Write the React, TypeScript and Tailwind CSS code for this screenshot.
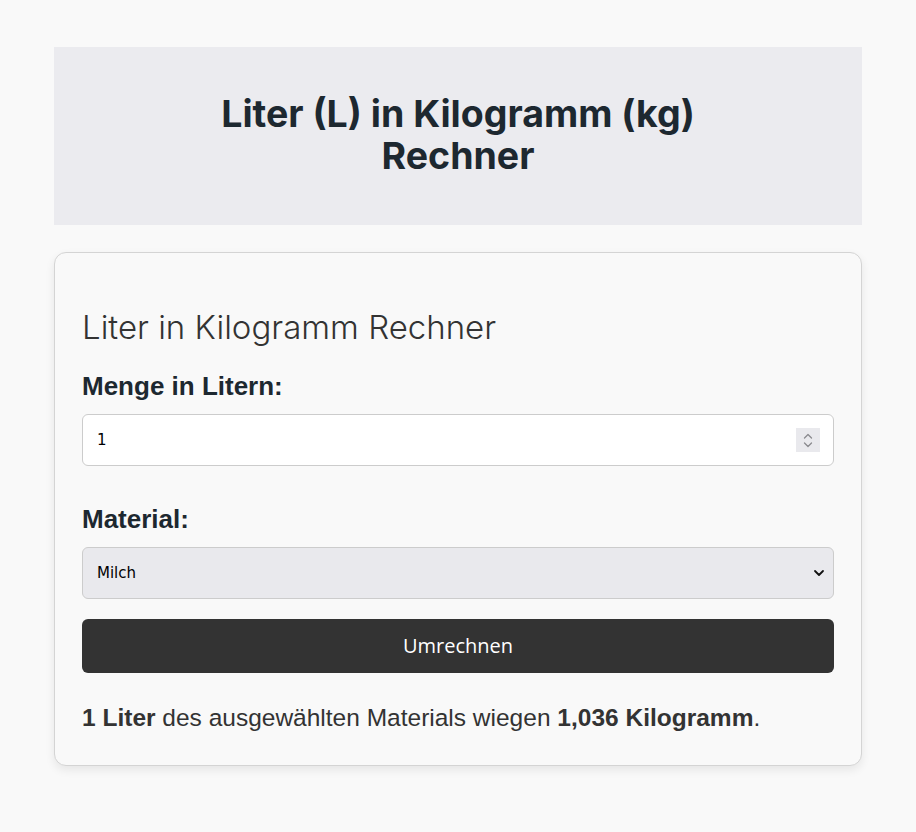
import { useState } from 'react'

const DENSITIES: Record<string, number> = {
  Milch: 1.036,
  Wasser: 1,
  Olivenöl: 0.918,
  Honig: 1.42,
}

export default function App() {
  const [liters, setLiters] = useState('1')
  const [material, setMaterial] = useState('Milch')
  const [result, setResult] = useState({ l: 1, kg: 1.036 })

  const convert = () => {
    const l = parseFloat(liters) || 0
    setResult({ l, kg: l * DENSITIES[material] })
  }

  return (
    <div className="min-h-screen bg-[#f9f9f9] px-[54px] pt-[47px] pb-16 font-['Liberation_Sans',Arial,sans-serif] text-[#222]">
      {/* Kopfbereich */}
      <header className="bg-[#ebebef] pt-[46px] pb-[48px] text-center">
        <h1 className="mx-auto max-w-[540px] font-['Inter',sans-serif] text-[37.5px] leading-[42px] font-bold text-[#1d2830]">
          Liter (L) in Kilogramm (kg) Rechner
        </h1>
      </header>

      {/* Rechner */}
      <section className="mt-[27px] rounded-xl border border-[#d4d4d4] bg-[#f9f9f9] px-[27px] pt-[54px] pb-[33px] shadow-[0_4px_10px_rgba(0,0,0,0.08)]">
        <h2 className="font-['Inter',sans-serif] text-[33px] leading-[40px] font-light text-[#333]">
          Liter in Kilogramm Rechner
        </h2>

        <label className="mt-[24px] block text-[26px] leading-[30px] font-bold text-[#1d2830]">
          Menge in Litern:
        </label>
        <div className="relative mt-[13px]">
          <input
            type="number"
            value={liters}
            onChange={(e) => setLiters(e.target.value)}
            className="block h-[52px] w-full [appearance:textfield] rounded-md border border-[#cccccc] bg-white px-[14px] font-['DejaVu_Sans',sans-serif] text-[15px] text-black outline-none [&::-webkit-inner-spin-button]:appearance-none [&::-webkit-outer-spin-button]:appearance-none"
          />
          <span className="pointer-events-none absolute top-[14px] right-[14px] flex h-[24px] w-[24px] flex-col items-center justify-center gap-[3px] bg-[#e9e9ed]">
            <svg width="10" height="6" viewBox="0 0 10 6" fill="none">
              <path d="M1.5 5L5 1.5L8.5 5" stroke="#8a8a8e" strokeWidth="1.3" strokeLinecap="round" strokeLinejoin="round" />
            </svg>
            <svg width="10" height="6" viewBox="0 0 10 6" fill="none">
              <path d="M1.5 1L5 4.5L8.5 1" stroke="#8a8a8e" strokeWidth="1.3" strokeLinecap="round" strokeLinejoin="round" />
            </svg>
          </span>
        </div>

        <label className="mt-[38px] block text-[26px] leading-[30px] font-bold text-[#1d2830]">
          Material:
        </label>
        <div className="relative mt-[13px]">
          <select
            value={material}
            onChange={(e) => setMaterial(e.target.value)}
            className="block h-[52px] w-full appearance-none rounded-md border border-[#cccccc] bg-[#e9e9ed] px-[14px] font-['DejaVu_Sans',sans-serif] text-[15px] text-black outline-none"
          >
            {Object.keys(DENSITIES).map((m) => (
              <option key={m} value={m}>{m}</option>
            ))}
          </select>
          <svg className="pointer-events-none absolute top-1/2 right-[9px] -translate-y-1/2" width="12" height="12" viewBox="0 0 12 12" fill="none">
            <path d="M2 4L6 8L10 4" stroke="#111" strokeWidth="1.8" strokeLinecap="round" strokeLinejoin="round" />
          </svg>
        </div>

        <button
          type="button"
          onClick={convert}
          className="mt-[20px] block h-[54px] w-full rounded-md bg-[#333333] font-['Open_Sans',sans-serif] text-[20px] text-white"
        >
          Umrechnen
        </button>

        <p className="mt-[31px] text-[24.5px] leading-[28px] text-[#333]">
          <strong>{result.l.toLocaleString('de-DE')} Liter</strong> des ausgewählten Materials wiegen{' '}
          <strong>{result.kg.toLocaleString('de-DE', { minimumFractionDigits: 3, maximumFractionDigits: 3 })} Kilogramm</strong>.
        </p>
      </section>
    </div>
  )
}
